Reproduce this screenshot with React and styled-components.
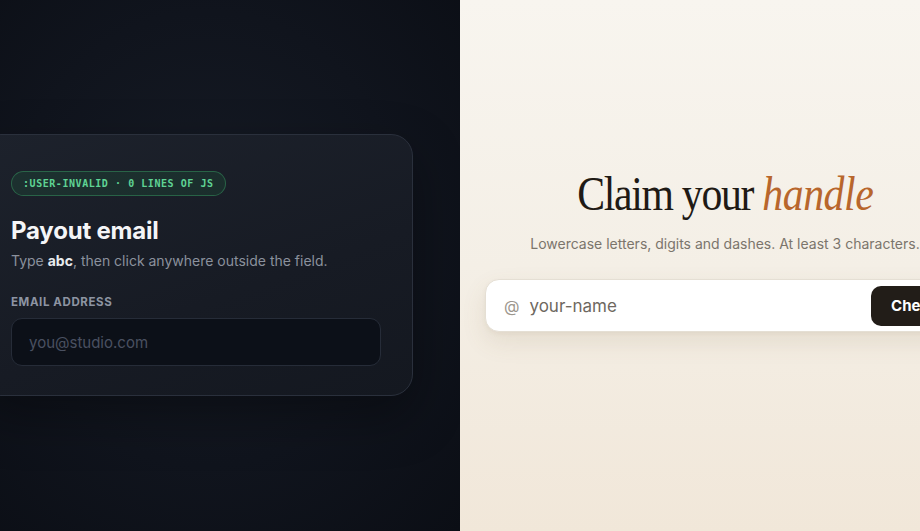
import React from "react";
import styled, { createGlobalStyle } from "styled-components";

const Global = createGlobalStyle`
  html, body { margin: 0; padding: 0; }
  body { width: 920px; height: 531px; overflow: hidden; }
  * { box-sizing: border-box; }
`;

const Page = styled.div`
  display: grid;
  grid-template-columns: 460px 460px;
  width: 920px;
  height: 531px;
  overflow: hidden;
`;

const DarkPanel = styled.section`
  background: radial-gradient(ellipse at 45% 45%, #161b25 0%, #10141d 55%, #0b0e15 100%);
  padding-top: 134px;
  overflow: hidden;
  font-family: "Inter", "Liberation Sans", sans-serif;
`;

const Card = styled.div`
  margin-left: -21px;
  width: 434px;
  height: 262px;
  border-radius: 22px;
  border: 1px solid #2a303c;
  background: linear-gradient(160deg, #1d222c 0%, #171b24 60%, #141820 100%);
  padding: 36px 32px 0 31px;
  display: flex;
  flex-direction: column;
  box-shadow: 0 20px 50px rgba(0, 0, 0, 0.35);
`;

const Badge = styled.span`
  align-self: flex-start;
  height: 25px;
  padding: 0 11px;
  display: inline-flex;
  align-items: center;
  border-radius: 999px;
  border: 1px solid rgba(74, 222, 128, 0.3);
  background: rgba(34, 120, 70, 0.18);
  color: #5fd394;
  font-family: "DejaVu Sans Mono", "Liberation Mono", monospace;
  font-size: 10px;
  font-weight: 700;
  letter-spacing: 0.55px;
  text-transform: uppercase;
`;

const Title = styled.h2`
  margin: 20px 0 0;
  color: #f4f5f7;
  font-size: 24px;
  font-weight: 700;
  letter-spacing: -0.2px;
  line-height: 30px;
`;

const Sub = styled.p`
  margin: 5px 0 0;
  color: #8b919d;
  font-size: 14px;
  line-height: 20px;
  b { color: #e8eaee; font-weight: 700; }
`;

const Label = styled.label`
  margin-top: 24px;
  color: #8d94a2;
  font-size: 11.5px;
  font-weight: 700;
  letter-spacing: 0.6px;
  text-transform: uppercase;
`;

const Field = styled.input`
  margin-top: 9px;
  width: 370px;
  height: 48px;
  border-radius: 11px;
  border: 1px solid #262c38;
  background: #0c1018;
  padding: 0 17px;
  font-family: inherit;
  font-size: 15px;
  color: #e8eaee;
  outline: none;
  &::placeholder { color: #4a5061; }
`;

const LightPanel = styled.section`
  background: linear-gradient(180deg, #f8f5ef 0%, #f4efe6 50%, #f1e7d9 100%);
  padding: 169px 0 0 25px;
  overflow: hidden;
  font-family: "Inter", "Liberation Sans", sans-serif;
`;

const Column = styled.div`
  width: 480px;
  display: flex;
  flex-direction: column;
  align-items: center;
`;

const Heading = styled.h1`
  margin: 0;
  font-family: "Liberation Serif", serif;
  font-weight: 400;
  font-size: 48px;
  line-height: 50px;
  color: #1f1a15;
  letter-spacing: -1.5px;
  white-space: nowrap;
  transform: scaleX(0.87);
`;

const Accent = styled.em`
  color: #b8662c;
  font-style: italic;
  letter-spacing: -0.5px;
`;

const Lead = styled.p`
  margin: 15px 0 0;
  color: #7b756c;
  font-size: 14px;
  line-height: 20px;
  white-space: nowrap;
`;

const Bar = styled.div`
  margin-top: 25px;
  width: 480px;
  height: 53px;
  border-radius: 14px;
  background: #ffffff;
  border: 1px solid #e5dfd4;
  box-shadow: 0 10px 24px rgba(120, 95, 60, 0.12), 0 2px 4px rgba(120, 95, 60, 0.06);
  display: flex;
  align-items: center;
  padding: 0 6px 0 18px;
`;

const At = styled.span`
  color: #9c968d;
  font-size: 16px;
  margin-right: 8px;
`;

const HandleInput = styled.input`
  flex: 1;
  min-width: 0;
  border: none;
  outline: none;
  background: transparent;
  font-family: inherit;
  font-size: 17px;
  color: #1f1a15;
  &::placeholder { color: #6e685f; }
`;

const Button = styled.button`
  height: 40px;
  padding: 0 20px;
  border: none;
  border-radius: 10px;
  background: #221d18;
  color: #fff;
  font-family: inherit;
  font-size: 15px;
  font-weight: 700;
  white-space: nowrap;
`;

export default function App() {
  return (
    <>
      <Global />
      <Page>
        <DarkPanel>
          <Card>
            <Badge>:user-invalid · 0 lines of JS</Badge>
            <Title>Payout email</Title>
            <Sub>
              Type <b>abc</b>, then click anywhere outside the field.
            </Sub>
            <Label htmlFor="email">Email address</Label>
            <Field id="email" type="email" placeholder="you@studio.com" />
          </Card>
        </DarkPanel>
        <LightPanel>
          <Column>
            <Heading>
              Claim your <Accent>handle</Accent>
            </Heading>
            <Lead>Lowercase letters, digits and dashes. At least 3 characters.</Lead>
            <Bar>
              <At>@</At>
              <HandleInput placeholder="your-name" />
              <Button>Check</Button>
            </Bar>
          </Column>
        </LightPanel>
      </Page>
    </>
  );
}
